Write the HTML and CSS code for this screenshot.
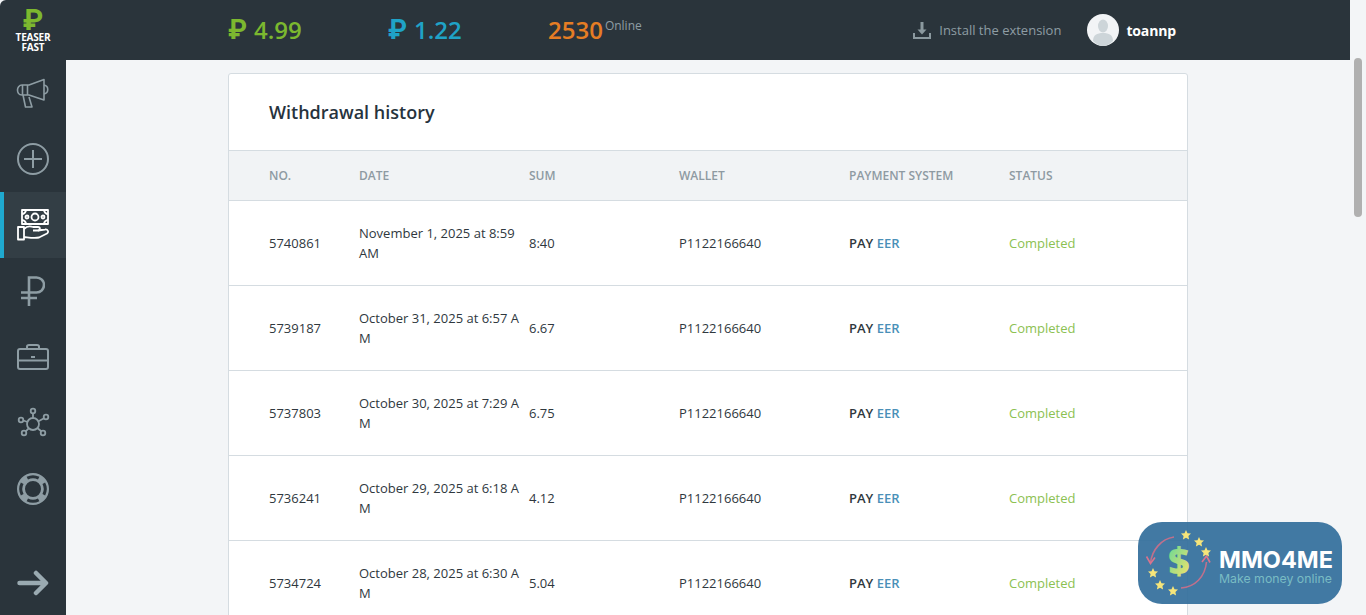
FILE: index.html
```html
<!DOCTYPE html>
<html lang="en">
<head>
<meta charset="utf-8">
<title>Withdrawal history</title>
<link rel="stylesheet" href="styles.css">
</head>
<body>
<div class="app">
  <header class="topbar">
    <div class="logo">
      <span class="logo-mark">₽</span>
      <span class="logo-text">TEASER<br>FAST</span>
    </div>
    <div class="stats">
      <span class="stat stat-green"><span class="rub">₽</span>4.99</span>
      <span class="stat stat-blue"><span class="rub">₽</span>1.22</span>
      <span class="stat stat-orange">2530<sup class="online">Online</sup></span>
    </div>
    <a class="install">
      <svg class="install-icon" viewBox="0 0 18 18" width="18" height="18"><path d="M9 1v9" stroke="#8b999f" stroke-width="3" fill="none"/><path d="M4.500 8.500h9L9 13.500z" fill="#8b999f"/><path d="M1 12v5h16v-5" stroke="#8b999f" stroke-width="2" fill="none"/></svg>
      Install the extension
    </a>
    <div class="user">
      <svg class="avatar" viewBox="0 0 32 32" width="32" height="32"><circle cx="16" cy="16" r="16" fill="#f2f4f6"/><ellipse cx="16" cy="12" rx="5" ry="6.500" fill="#cdd5d9"/><path d="M6 27c0-6 4-8 10-8s10 2 10 8c-3 3-7 5-10 5s-7-2-10-5z" fill="#cdd5d9"/></svg>
      <span class="username">toannp</span>
    </div>
  </header>
  <div class="below">
    <nav class="sidebar">
      <a class="nav-item nav-1"><svg viewBox="0 0 34 30" width="34" height="30" fill="none" stroke="#8e9da4" stroke-width="1.600" stroke-linejoin="round"><path d="M6 7h7L28 1.500V22L13 17H6c-3.500 0-4.500-3-4.500-5S3 7 6 7z"/><path d="M6.500 7v10M11.500 7v10"/><path d="M28 7c5 1 5 8 0 9"/><path d="M7 17l2.500 12H16l-3-10"/></svg></a>
      <a class="nav-item nav-2"><svg viewBox="0 0 32 32" width="32" height="32" fill="none" stroke="#8e9da4" stroke-width="2"><circle cx="16" cy="16" r="15"/><path d="M16 7v18M7 16h18"/></svg></a>
      <a class="nav-item nav-3 active"><svg viewBox="0 0 32 32" width="32" height="32" fill="none" stroke="#fff" stroke-width="1.800" stroke-linejoin="round"><path d="M5 1h26v14H5z"/><circle cx="18" cy="8" r="3.500"/><circle cx="10" cy="8" r="1.500"/><circle cx="26" cy="8" r="1.500"/><path d="M5 5c2 0 4-2 4-4M27 1c0 2 2 4 4 4M5 11c2 0 4 2 4 4M27 15c0-2 2-4 4-4"/><path d="M1 18h6v12.500H1z"/><path d="M7 20c3-3 6-3 9-2h5c2.500 0 2.500 3.500 0 3.500h-5"/><path d="M21 21.500l7-1c3-.5 4 2.500 2 4l-8 4c-5 1-10 0-15-.5"/></svg></a>
      <a class="nav-item nav-4"><svg viewBox="0 0 24 30" width="24" height="30" fill="none" stroke="#8e9da4" stroke-width="2.600"><path d="M8 30V1.500h7.500a7.500 7.500 0 0 1 0 15H0M0 22h16"/></svg></a>
      <a class="nav-item nav-5"><svg viewBox="0 0 32 26" width="32" height="26" fill="none" stroke="#8e9da4" stroke-width="2"><rect x="1" y="5" width="30" height="20" rx="2"/><path d="M1 16.500h30M10 5V2.500C10 1.500 11 1 12 1h8c1 0 2 .5 2 1.500V5"/><path d="M14 13h4"/></svg></a>
      <a class="nav-item nav-6"><svg viewBox="0 0 34 34" width="34" height="34" fill="none" stroke="#8e9da4" stroke-width="1.800"><circle cx="17" cy="18" r="6"/><circle cx="17" cy="5" r="2.300"/><circle cx="5" cy="14" r="2.300"/><circle cx="30" cy="11" r="2.300"/><circle cx="8" cy="27" r="2.300"/><circle cx="27" cy="27" r="2.300"/><path d="M17 7.500V12M7.300 14.500l4.200 1.500M28 12.200l-5.500 3M9.700 25.300l3-3M25.300 25.300l-4-3.300"/></svg></a>
      <a class="nav-item nav-7"><svg viewBox="0 0 32 32" width="32" height="32" fill="none"><circle cx="16" cy="16" r="12" stroke="#8e9da4" stroke-width="8"/><path d="M10.300 5.200A12.200 12.200 0 0 1 21.700 5.200M10.300 26.800A12.200 12.200 0 0 0 21.700 26.800M5.200 10.300A12.200 12.200 0 0 0 5.200 21.700M26.800 10.300A12.200 12.200 0 0 1 26.800 21.700" stroke="#2a343b" stroke-width="3"/></svg></a>
      <a class="nav-item nav-8"><svg viewBox="0 0 32 26" width="32" height="26" fill="none" stroke="#9aaab1" stroke-width="4.500" stroke-linecap="round" stroke-linejoin="round"><path d="M2.500 13h26M19 3l10 10-10 10"/></svg></a>
    </nav>
    <main class="content">
      <section class="card">
        <h1 class="card-title">Withdrawal history</h1>
        <div class="row head">
          <div class="c-no">NO.</div><div class="c-date">DATE</div><div class="c-sum">SUM</div><div class="c-wallet">WALLET</div><div class="c-sys">PAYMENT SYSTEM</div><div class="c-status">STATUS</div>
        </div>
        <div class="row">
          <div class="c-no">5740861</div><div class="c-date">November 1, 2025 at 8:59<br>AM</div><div class="c-sum">8:40</div><div class="c-wallet">P1122166640</div><div class="c-sys"><b>PAY</b> <b class="eer">EER</b></div><div class="c-status done">Completed</div>
        </div>
        <div class="row">
          <div class="c-no">5739187</div><div class="c-date">October 31, 2025 at 6:57 A<br>M</div><div class="c-sum">6.67</div><div class="c-wallet">P1122166640</div><div class="c-sys"><b>PAY</b> <b class="eer">EER</b></div><div class="c-status done">Completed</div>
        </div>
        <div class="row">
          <div class="c-no">5737803</div><div class="c-date">October 30, 2025 at 7:29 A<br>M</div><div class="c-sum">6.75</div><div class="c-wallet">P1122166640</div><div class="c-sys"><b>PAY</b> <b class="eer">EER</b></div><div class="c-status done">Completed</div>
        </div>
        <div class="row">
          <div class="c-no">5736241</div><div class="c-date">October 29, 2025 at 6:18 A<br>M</div><div class="c-sum">4.12</div><div class="c-wallet">P1122166640</div><div class="c-sys"><b>PAY</b> <b class="eer">EER</b></div><div class="c-status done">Completed</div>
        </div>
        <div class="row">
          <div class="c-no">5734724</div><div class="c-date">October 28, 2025 at 6:30 A<br>M</div><div class="c-sum">5.04</div><div class="c-wallet">P1122166640</div><div class="c-sys"><b>PAY</b> <b class="eer">EER</b></div><div class="c-status done">Completed</div>
        </div>
      </section>
    </main>
    <div class="scrollbar"><div class="thumb"></div></div>
  </div>
  <div class="badge">
    <svg class="badge-icon" viewBox="0 0 74 74" width="74" height="74">
      <defs>
        <linearGradient id="dollar" x1="0" y1="0" x2="0.7" y2="1"><stop offset="0" stop-color="#4fd6a0"/><stop offset="1" stop-color="#f0e36a"/></linearGradient>
        <path id="star" d="M0-5l1.500 3.200 3.500.4-2.600 2.400.7 3.500L0 2.800l-3.100 1.700.7-3.500-2.600-2.400 3.500-.4z"/>
      </defs>
      <path d="M30 11C17 13 8 24 6.500 37" fill="none" stroke="#c0708c" stroke-width="1.600"/>
      <path d="M2.500 30.500l4 7 4.500-6" fill="none" stroke="#d8748e" stroke-width="1.600"/>
      <path d="M37 62c14-1 24-11 25.500-26" fill="none" stroke="#c0708c" stroke-width="1.600"/>
      <path d="M58 36l4.500-6 3.500 6.500" fill="none" stroke="#d8748e" stroke-width="1.600"/>
      <text x="35" y="48" class="dollar" text-anchor="middle" fill="url(#dollar)">$</text>
      <g fill="#f6e57a"><use href="#star" x="42" y="9"/><use href="#star" x="55" y="16"/><use href="#star" x="62" y="26"/><use href="#star" x="9" y="47"/><use href="#star" x="16" y="59"/><use href="#star" x="29" y="65"/></g>
    </svg>
    <div class="badge-text">
      <span class="badge-name">MMO4ME</span>
      <span class="badge-sub">Make money online</span>
    </div>
  </div>
</div>
</body>
</html>
```
FILE: styles.css
```css
* { box-sizing: border-box; }
html, body { margin: 0; height: 100%; overflow: hidden; }
body { font-family: "Open Sans", "Noto Sans", sans-serif; color: #2a343b; background: #f3f5f7; font-size: 13px; }
.app { width: 1366px; height: 615px; display: flex; flex-direction: column; overflow: hidden; position: relative; }

.topbar { height: 60px; flex: none; width: 1350px; background: #2a343b; display: flex; align-items: center; border-top-left-radius: 6px; }
.logo { width: 66px; height: 60px; display: flex; flex-direction: column; align-items: center; color: #fff; }
.logo-mark { color: #7cb82f; font-size: 29px; font-weight: 700; line-height: 22px; height: 22px; margin-top: 9px; font-family: "Roboto", sans-serif; }
.logo-text { font-size: 10px; font-weight: 700; line-height: 9.500px; text-align: center; margin-top: 2px; letter-spacing: -0.2px; }
.stats { display: flex; align-items: center; margin-left: 162px; }
.stat { font-size: 24px; font-weight: 600; line-height: 30px; white-space: nowrap; }
.rub { font-family: "Roboto", sans-serif; font-weight: 700; font-size: 27px; display: inline-block; width: 26px; }
.stat-green { color: #7cb82f; width: 160px; }
.stat-blue { color: #1fa3c7; width: 160px; }
.stat-orange { color: #e57d24; }
.online { font-size: 12px; font-weight: 400; color: #8e9da4; vertical-align: baseline; position: relative; top: -9px; line-height: 0; margin-left: 2px; }
.install { margin-left: auto; display: flex; align-items: center; gap: 8px; font-size: 13px; color: #8e9da4; }
.install-icon { display: block; }
.user { display: flex; align-items: center; margin-left: 26px; margin-right: 174px; gap: 7px; }
.avatar { display: block; }
.username { color: #fff; font-weight: 700; font-size: 14px; letter-spacing: -0.15px; }

.below { flex: 1; display: flex; min-height: 0; }
.sidebar { width: 66px; flex: none; background: #2a343b; display: flex; flex-direction: column; }
.nav-item { display: flex; align-items: center; justify-content: center; flex: none; height: 66px; }
.nav-3 { background: #333e45; border-left: 4px solid #1fa9cf; padding-right: 4px; }
.nav-8 { height: 122px; }

.content { flex: 1; min-width: 0; padding: 13px 162px 0; overflow: hidden; }
.card { background: #fff; border: 1px solid #d5dce1; border-radius: 3px; width: 960px; }
.card-title { margin: 0; height: 76px; padding-left: 40px; font-size: 18px; font-weight: 600; line-height: 77px; color: #27333d; }
.row { display: flex; align-items: center; height: 85px; padding-left: 40px; border-top: 1px solid #d5dce1; font-size: 13px; line-height: 20px; color: #2f383e; }
.head { height: 50px; background: #f1f3f5; font-size: 12px; font-weight: 600; color: #8e9aa2; }
.c-no { width: 90px; }
.c-date { width: 170px; }
.c-sum { width: 150px; }
.c-wallet { width: 170px; }
.c-sys { width: 160px; }
.c-status { width: 100px; }
.c-sys b { font-weight: 600; }
.eer { color: #4a90b8; }
.done { color: #8cc152; }

.scrollbar { width: 16px; flex: none; background: #f3f5f7; position: relative; }
.thumb { width: 8px; height: 159px; background: #b0b0b0; border-radius: 4px; position: absolute; left: 4px; top: -2px; }
.badge { position: absolute; left: 1138px; top: 522px; width: 204px; height: 82px; border-radius: 24px; background: rgba(50, 110, 155, 0.92); display: flex; align-items: center; padding-left: 6px; }
.badge-icon { display: block; flex: none; }
.dollar { font-family: "Open Sans", sans-serif; font-size: 37px; font-weight: 800; }
.badge-text { display: flex; flex-direction: column; margin-left: 1px; padding-top: 8px; }
.badge-name { color: #fff; font-family: "Inter", "Open Sans", sans-serif; font-size: 23.500px; font-weight: 700; line-height: 24px; white-space: nowrap; }
.badge-sub { color: #79bcc4; font-family: "Inter", "Open Sans", sans-serif; font-size: 12.300px; line-height: 14px; white-space: nowrap; }
```
